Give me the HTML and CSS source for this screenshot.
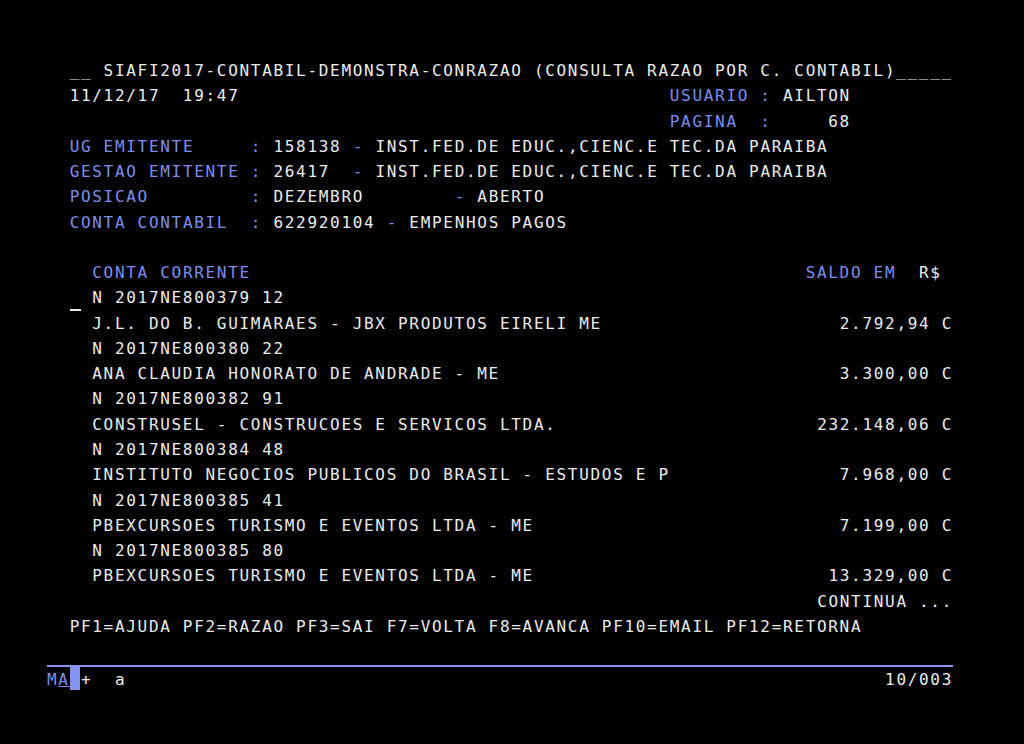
FILE: index.html
```html
<!DOCTYPE html>
<html>

  <head>

    <meta charset="utf-8">

    <title> SIAFI - CONRAZAO </title>

    <link rel="stylesheet" href="styles.css">

  </head>

  <body>
    <div class="screen">
      <div class="line">  __ SIAFI2017-CONTABIL-DEMONSTRA-CONRAZAO (CONSULTA RAZAO POR C. CONTABIL)_____</div>
      <div class="line">  11/12/17  19:47                                      <span class="fld">USUARIO :</span> AILTON</div>
      <div class="line">                                                       <span class="fld">PAGINA  :</span>     68</div>
      <div class="line">  <span class="fld">UG EMITENTE     :</span> 158138 <span class="fld">-</span> INST.FED.DE EDUC.,CIENC.E TEC.DA PARAIBA</div>
      <div class="line">  <span class="fld">GESTAO EMITENTE :</span> 26417  <span class="fld">-</span> INST.FED.DE EDUC.,CIENC.E TEC.DA PARAIBA</div>
      <div class="line">  <span class="fld">POSICAO         :</span> DEZEMBRO        <span class="fld">-</span> ABERTO</div>
      <div class="line">  <span class="fld">CONTA CONTABIL  :</span> 622920104 <span class="fld">-</span> EMPENHOS PAGOS</div>
      <div class="line"> </div>
      <div class="line">    <span class="fld">CONTA CORRENTE</span>                                                 <span class="fld">SALDO EM</span>  R$</div>
      <div class="line">  <span class="cursor"></span> N 2017NE800379 12</div>
      <div class="line split"><span>    J.L. DO B. GUIMARAES - JBX PRODUTOS EIRELI ME</span><span>2.792,94 C</span></div>
      <div class="line">    N 2017NE800380 22</div>
      <div class="line split"><span>    ANA CLAUDIA HONORATO DE ANDRADE - ME</span><span>3.300,00 C</span></div>
      <div class="line">    N 2017NE800382 91</div>
      <div class="line split"><span>    CONSTRUSEL - CONSTRUCOES E SERVICOS LTDA.</span><span>232.148,06 C</span></div>
      <div class="line">    N 2017NE800384 48</div>
      <div class="line split"><span>    INSTITUTO NEGOCIOS PUBLICOS DO BRASIL - ESTUDOS E P</span><span>7.968,00 C</span></div>
      <div class="line">    N 2017NE800385 41</div>
      <div class="line split"><span>    PBEXCURSOES TURISMO E EVENTOS LTDA - ME</span><span>7.199,00 C</span></div>
      <div class="line">    N 2017NE800385 80</div>
      <div class="line split"><span>    PBEXCURSOES TURISMO E EVENTOS LTDA - ME</span><span>13.329,00 C</span></div>
      <div class="line split"><span></span><span>CONTINUA ...</span></div>
      <div class="line">  PF1=AJUDA PF2=RAZAO PF3=SAI F7=VOLTA F8=AVANCA PF10=EMAIL PF12=RETORNA</div>
      <div class="line"> </div>

      <div class="oia">
        <div class="line split">
          <span><span class="fld">M<span class="ul">A</span></span><span class="block"></span>+  a</span>
          <span>10/003</span>
        </div>
      </div>
    </div>
  </body>

</html>
```

FILE: styles.css
```css
body, html {
    margin: 0;
    padding: 0;
    background-color: #000;
    overflow: hidden;
}
.screen {
    width: 906px;
    margin-left: 47px;
    padding-top: 58px;
    font-family: "DejaVu Sans Mono", monospace;
    font-size: 16px;
    letter-spacing: 1.69px;
    color: #ececec;
}
.line {
    height: 25.27px;
    line-height: 25.27px;
    white-space: pre;
}
.split {
    display: flex;
    justify-content: space-between;
}
.fld {
    color: #7d8ef0;
}
.cursor {
    display: inline-block;
    width: 11.3px;
    height: 25.27px;
    vertical-align: top;
    box-sizing: border-box;
    border-bottom: 2px solid #ececec;
}
.oia {
    margin-top: 1px;
    border-top: 2px solid #8494f0;
}
.ul {
    text-decoration: underline;
}
.block {
    display: inline-block;
    width: 10px;
    height: 23px;
    margin-right: 1.3px;
    vertical-align: top;
    background-color: #8494f0;
}
```
